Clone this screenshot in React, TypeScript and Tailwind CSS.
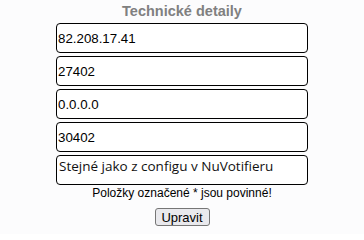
import React from 'react';

const FIELDS = ['82.208.17.41', '27402', '0.0.0.0', '30402'];

export default function App() {
  return (
    <div className="min-h-[234px] w-full bg-[#fcfcfd] font-['Liberation_Sans',Arial,sans-serif]">
      <div className="mx-auto flex w-[252px] flex-col items-center">
        <h2 className="flex h-[23px] items-center justify-center text-[14.5px] font-bold leading-none text-[#808080]">
          Technické detaily
        </h2>

        {FIELDS.map((value) => (
          <input
            key={value}
            readOnly
            value={value}
            className="mb-[3px] h-[30px] w-full rounded-[4px] border-[1.5px] border-black bg-white px-[1px] text-[13.3px] text-black outline-none"
          />
        ))}

        <textarea
          readOnly
          value="Stejné jako z configu v NuVotifieru"
          className="h-[30px] w-full resize-none overflow-hidden rounded-[4px] border-[1.5px] border-black bg-white px-[2px] py-0 font-['Open_Sans',sans-serif] text-[13.5px] leading-[20px] text-[#111] outline-none"
        />

        <p className="mt-[1px] text-[12px] leading-[15px] text-black">
          Položky označené * jsou povinné!
        </p>

        <button className="mt-[7px] h-[18px] w-[55px] rounded-[3px] border border-[#767676] bg-[#e9e9ed] text-[13px] leading-none text-black">
          Upravit
        </button>
      </div>
    </div>
  );
}
